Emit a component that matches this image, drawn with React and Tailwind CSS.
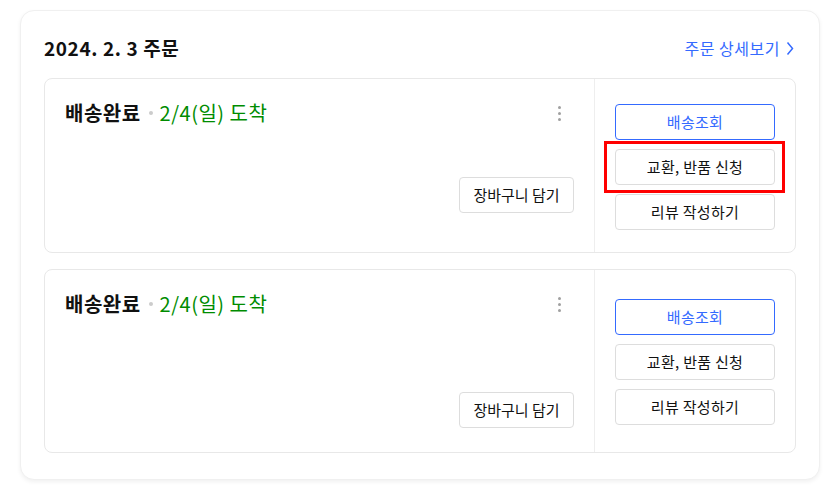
import React from "react";

function Kebab() {
  return (
    <div className="flex h-[24px] w-[24px] flex-col items-center justify-center gap-[3px]">
      <span className="block h-[3px] w-[3px] rounded-full bg-[#a0a0a0]" />
      <span className="block h-[3px] w-[3px] rounded-full bg-[#a0a0a0]" />
      <span className="block h-[3px] w-[3px] rounded-full bg-[#a0a0a0]" />
    </div>
  );
}

function OrderCard({ highlight, rightPad, leftPad }) {
  return (
    <div className="flex rounded-[8px] border border-[#e8e8e8] bg-white">
      <div className={"flex flex-1 flex-col justify-between pl-[20px] pr-[20px] pt-[20px] " + leftPad}>
        <div className="flex items-center justify-between">
          <div className="flex items-center text-[20px] leading-[28px] tracking-[0.5px]">
            <span className="font-bold text-[#111]">배송완료</span>
            <span className="ml-[8px] mr-[7px] block h-[4px] w-[4px] rounded-full bg-[#cccccc]" />
            <span className="text-[#008c00]">2/4(일) 도착</span>
          </div>
          <div className="mr-[3px]">
            <Kebab />
          </div>
        </div>
        <div className="flex justify-end">
          <button className="h-[36px] w-[115px] rounded-[4px] border border-[#dddddd] bg-white text-[15px] text-[#111]">
            장바구니 담기
          </button>
        </div>
      </div>
      <div className={"flex w-[201px] flex-col gap-[9px] border-l border-[#eeeeee] pl-[20px] pr-[20px] " + rightPad}>
        <button className="h-[36px] w-[160px] rounded-[4px] border border-[#346aff] bg-white text-[15px] tracking-[0.3px] text-[#346aff]">
          배송조회
        </button>
        <div className="relative">
          <button className="h-[36px] w-[160px] rounded-[4px] border border-[#dddddd] bg-white text-[15px] tracking-[0.3px] text-[#111]">
            교환, 반품 신청
          </button>
          {highlight && (
            <div className="pointer-events-none absolute -bottom-[8px] -left-[11px] -right-[10px] -top-[8px] border-[3px] border-[#ff0000]" />
          )}
        </div>
        <button className="h-[36px] w-[160px] rounded-[4px] border border-[#dddddd] bg-white text-[15px] tracking-[0.3px] text-[#111]">
          리뷰 작성하기
        </button>
      </div>
    </div>
  );
}

export default function App() {
  return (
    <div
      className="min-h-[495px] w-[826px] bg-white pl-[20px] pt-[10px]"
      style={{ fontFamily: '"Noto Sans CJK KR", "Noto Sans", sans-serif' }}
    >
      <div className="w-[800px] rounded-[14px] border border-[#f0f0f0] bg-white px-[23px] pb-[26px] pt-[23px] shadow-[0_2px_4px_rgba(0,0,0,0.06)]">
        <div className="mb-[16px] flex items-center justify-between">
          <h1 className="text-[19px] font-bold leading-[28px] tracking-[0.6px] text-[#111]">2024. 2. 3 주문</h1>
          <a className="mr-[2px] flex items-center gap-[6px] text-[16px] tracking-[0.5px] text-[#346aff]">
            주문 상세보기
            <svg width="8" height="15" viewBox="0 0 8 15" fill="none">
              <path d="M1.5 1.5 L6.5 7.5 L1.5 13.5" stroke="#346aff" strokeWidth="1.5" />
            </svg>
          </a>
        </div>
        <div className="flex flex-col gap-[16px]">
          <OrderCard highlight rightPad="pt-[25px] pb-[22px]" leftPad="pb-[39px]" />
          <OrderCard rightPad="pt-[29px] pb-[27px]" leftPad="pb-[24px]" />
        </div>
      </div>
    </div>
  );
}
